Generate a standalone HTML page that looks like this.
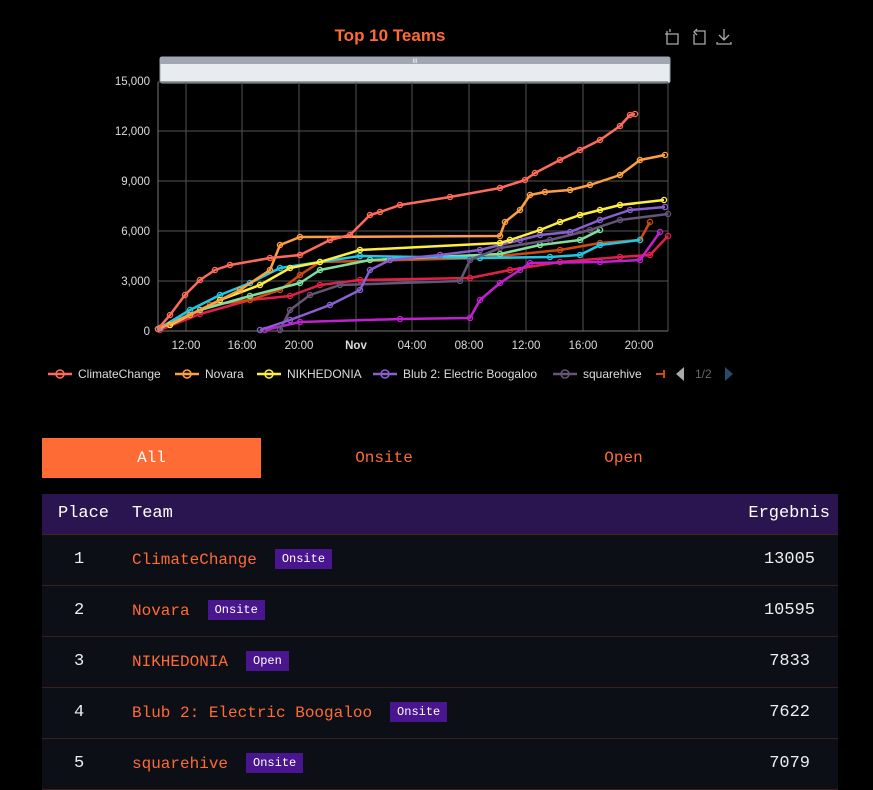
<!DOCTYPE html>
<html><head><meta charset="utf-8"><style>
body{margin:0;background:#000;width:873px;height:788px;overflow:hidden;font-family:"Liberation Sans",sans-serif;}
.mono{font-family:"Liberation Mono",monospace;}
.tabs{position:absolute;left:42px;top:438px;width:796px;height:40px;}
.tab{position:absolute;top:0;height:40px;line-height:40px;text-align:center;font-size:16px;color:#ff6b35;width:246px}
.tbl{position:absolute;left:42px;top:494px;width:796px;}
.hdr{height:40px;background:#2a1550;color:#fff;font-size:17px;position:relative;border-bottom:1px solid #4a2418}
.row{height:50px;background:#0d0f17;border-bottom:1px solid #3a2018;position:relative;color:#eee;font-size:17px}
.c{position:absolute;top:0;line-height:50px}
.hdr .c{line-height:40px}
.name{color:#ff6b35;font-size:16px}
.badge{display:inline-block;background:#4a168f;color:#fff;font-size:12px;line-height:20px;padding:0 7px;margin-left:18px;vertical-align:2px}
</style></head><body>
<svg width="873" height="400" style="position:absolute;left:0;top:0" font-family="Liberation Sans, sans-serif">
<defs>
<marker id="m1" markerWidth="8" markerHeight="8" refX="4" refY="4" markerUnits="userSpaceOnUse"><circle cx="4" cy="4" r="2.6" fill="none" stroke="#ff6b5b" stroke-width="1.3"/></marker>
<marker id="m2" markerWidth="8" markerHeight="8" refX="4" refY="4" markerUnits="userSpaceOnUse"><circle cx="4" cy="4" r="2.6" fill="none" stroke="#ffa040" stroke-width="1.3"/></marker>
<marker id="m3" markerWidth="8" markerHeight="8" refX="4" refY="4" markerUnits="userSpaceOnUse"><circle cx="4" cy="4" r="2.6" fill="none" stroke="#ffee40" stroke-width="1.3"/></marker>
<marker id="m4" markerWidth="8" markerHeight="8" refX="4" refY="4" markerUnits="userSpaceOnUse"><circle cx="4" cy="4" r="2.6" fill="none" stroke="#8a5fd0" stroke-width="1.3"/></marker>
<marker id="m5" markerWidth="8" markerHeight="8" refX="4" refY="4" markerUnits="userSpaceOnUse"><circle cx="4" cy="4" r="2.6" fill="none" stroke="#665577" stroke-width="1.3"/></marker>
<marker id="m6" markerWidth="8" markerHeight="8" refX="4" refY="4" markerUnits="userSpaceOnUse"><circle cx="4" cy="4" r="2.6" fill="none" stroke="#20c8e8" stroke-width="1.3"/></marker>
<marker id="m7" markerWidth="8" markerHeight="8" refX="4" refY="4" markerUnits="userSpaceOnUse"><circle cx="4" cy="4" r="2.6" fill="none" stroke="#7fe0a0" stroke-width="1.3"/></marker>
<marker id="m8" markerWidth="8" markerHeight="8" refX="4" refY="4" markerUnits="userSpaceOnUse"><circle cx="4" cy="4" r="2.6" fill="none" stroke="#d04a10" stroke-width="1.3"/></marker>
<marker id="m9" markerWidth="8" markerHeight="8" refX="4" refY="4" markerUnits="userSpaceOnUse"><circle cx="4" cy="4" r="2.6" fill="none" stroke="#c020d0" stroke-width="1.3"/></marker>
<marker id="m10" markerWidth="8" markerHeight="8" refX="4" refY="4" markerUnits="userSpaceOnUse"><circle cx="4" cy="4" r="2.6" fill="none" stroke="#e0204a" stroke-width="1.3"/></marker>
</defs>
<text x="390" y="41" text-anchor="middle" fill="#ff6b35" font-size="17" font-weight="bold">Top 10 Teams</text>
<g stroke="#aaa" fill="none" stroke-width="1.3">
<path d="M667 31v13h11v-10h-13M670 29v3"/>
<path d="M694 34v10h11v-13h-9M697 29l-3 3 3 3"/>
<path d="M724 29v10M719 35l5 5 5-5M717 42v2h14v-2"/>
</g>
<rect x="160" y="57" width="510" height="26" rx="2" fill="#e8ebf0" stroke="#9aa" />
<rect x="160" y="57" width="510" height="7" fill="#a0a6b2"/>
<text x="415" y="63" font-size="6" fill="#fff" text-anchor="middle">III</text>
<g stroke="#555" stroke-width="1">
<path d="M158 281H668M158 231H668M158 181H668M158 131H668M158 82H668"/>
<path d="M186 82V331M242 82V331M299 82V331M356 82V331M412 82V331M469 82V331M526 82V331M583 82V331M639 82V331M668 82V331"/>
</g>
<path d="M158 82V331H668" stroke="#777" fill="none"/>
<g font-size="11.5" fill="#ddd" text-anchor="end">
<text x="150" y="335">0</text><text x="150" y="285">3,000</text><text x="150" y="235">6,000</text><text x="150" y="185">9,000</text><text x="150" y="135">12,000</text><text x="150" y="85">15,000</text>
</g>
<g font-size="11.5" fill="#ddd" text-anchor="middle">
<text x="186" y="349">12:00</text><text x="242" y="349">16:00</text><text x="299" y="349">20:00</text><text x="356" y="349" font-weight="bold">Nov</text><text x="412" y="349">04:00</text><text x="469" y="349">08:00</text><text x="526" y="349">12:00</text><text x="583" y="349">16:00</text><text x="639" y="349">20:00</text>
</g>
<g fill="none" stroke-width="2.5" stroke-linejoin="round">
<polyline stroke="#e0204a" marker-start="url(#m10)" marker-mid="url(#m10)" marker-end="url(#m10)" points="160,330 200,314 250,300 290,296 320,285 360,280 470,278 510,270 560,262 620,257 650,255 668,236"/>
<polyline stroke="#c020d0" marker-start="url(#m9)" marker-mid="url(#m9)" marker-end="url(#m9)" points="265,330 300,322 400,319 470,318 480,300 500,283 520,270 530,263 600,262 640,260 660,232"/>
<polyline stroke="#d04a10" marker-start="url(#m8)" marker-mid="url(#m8)" marker-end="url(#m8)" points="170,325 210,305 250,300 280,290 300,275 320,262 480,258 560,250 600,243 640,240 650,222"/>
<polyline stroke="#7fe0a0" marker-start="url(#m7)" marker-mid="url(#m7)" marker-end="url(#m7)" points="160,328 200,310 250,296 300,283 320,270 370,260 500,254 540,245 580,240 600,230"/>
<polyline stroke="#20c8e8" marker-start="url(#m6)" marker-mid="url(#m6)" marker-end="url(#m6)" points="160,328 190,310 220,295 250,283 280,268 320,262 360,256 480,258 550,257 580,255 600,245 640,240"/>
<polyline stroke="#665577" marker-start="url(#m5)" marker-mid="url(#m5)" marker-end="url(#m5)" points="280,330 290,310 310,295 340,285 460,281 470,260 500,248 550,240 590,230 620,220 668,214"/>
<polyline stroke="#8a5fd0" marker-start="url(#m4)" marker-mid="url(#m4)" marker-end="url(#m4)" points="260,330 290,320 330,305 360,290 370,270 390,260 440,255 480,250 520,240 540,235 570,232 600,220 630,210 665,207"/>
<polyline stroke="#ffee40" marker-start="url(#m3)" marker-mid="url(#m3)" marker-end="url(#m3)" points="170,325 220,300 260,285 290,268 320,262 360,250 500,243 510,240 540,230 560,222 580,215 600,210 620,205 664,200"/>
<polyline stroke="#ffa040" marker-start="url(#m2)" marker-mid="url(#m2)" marker-end="url(#m2)" points="158,329 190,315 240,290 270,270 280,245 300,237 500,236 505,222 520,210 530,195 545,192 570,190 590,185 620,175 640,160 665,155"/>
<polyline stroke="#ff6b5b" marker-start="url(#m1)" marker-mid="url(#m1)" marker-end="url(#m1)" points="158,329 170,315 185,295 200,280 215,270 230,265 270,258 300,255 330,240 350,235 370,215 380,212 400,205 450,197 500,188 525,180 535,173 560,160 580,150 600,140 620,126 630,115 635,114"/>
</g>
<g font-size="12" fill="#ddd" stroke-width="2.5">
<path d="M48 374h24" stroke="#ff6b5b"/><circle cx="60" cy="374" r="4" fill="none" stroke="#ff6b5b" stroke-width="1.5"/><text x="78" y="378">ClimateChange</text>
<path d="M175 374h24" stroke="#ffa040"/><circle cx="187" cy="374" r="4" fill="none" stroke="#ffa040" stroke-width="1.5"/><text x="205" y="378">Novara</text>
<path d="M257 374h24" stroke="#ffee40"/><circle cx="269" cy="374" r="4" fill="none" stroke="#ffee40" stroke-width="1.5"/><text x="287" y="378">NIKHEDONIA</text>
<path d="M373 374h24" stroke="#8a5fd0"/><circle cx="385" cy="374" r="4" fill="none" stroke="#8a5fd0" stroke-width="1.5"/><text x="403" y="378">Blub 2: Electric Boogaloo</text>
<path d="M553 374h24" stroke="#665577"/><circle cx="565" cy="374" r="4" fill="none" stroke="#665577" stroke-width="1.5"/><text x="583" y="378">squarehive</text>
<path d="M656 374h8M664 370v8" stroke="#d04a10" stroke-width="2"/>
<path d="M684 367l-8 7 8 7z" fill="#aaa" stroke="none"/><text x="695" y="378" fill="#666">1/2</text><path d="M725 367l8 7-8 7z" fill="#2a4a6a" stroke="none"/>
</g>
</svg>
<div class="tabs mono">
<div class="tab" style="left:0;width:219px;background:#ff6b35;color:#fff">All</div>
<div class="tab" style="left:219px;width:246px">Onsite</div>
<div class="tab" style="left:465px;width:233px">Open</div>
</div>
<div class="tbl mono">
<div class="hdr"><span class="c" style="left:16px">Place</span><span class="c" style="left:90px">Team</span><span class="c" style="right:8px">Ergebnis</span></div>
<div class="row"><span class="c" style="left:32px">1</span><span class="c name" style="left:90px">ClimateChange<span class="badge">Onsite</span></span><span class="c" style="right:23px">13005</span></div>
<div class="row"><span class="c" style="left:32px">2</span><span class="c name" style="left:90px">Novara<span class="badge">Onsite</span></span><span class="c" style="right:23px">10595</span></div>
<div class="row"><span class="c" style="left:32px">3</span><span class="c name" style="left:90px">NIKHEDONIA<span class="badge">Open</span></span><span class="c" style="right:28px">7833</span></div>
<div class="row"><span class="c" style="left:32px">4</span><span class="c name" style="left:90px">Blub 2: Electric Boogaloo<span class="badge">Onsite</span></span><span class="c" style="right:28px">7622</span></div>
<div class="row"><span class="c" style="left:32px">5</span><span class="c name" style="left:90px">squarehive<span class="badge">Onsite</span></span><span class="c" style="right:28px">7079</span></div>
</div>
</body></html>
